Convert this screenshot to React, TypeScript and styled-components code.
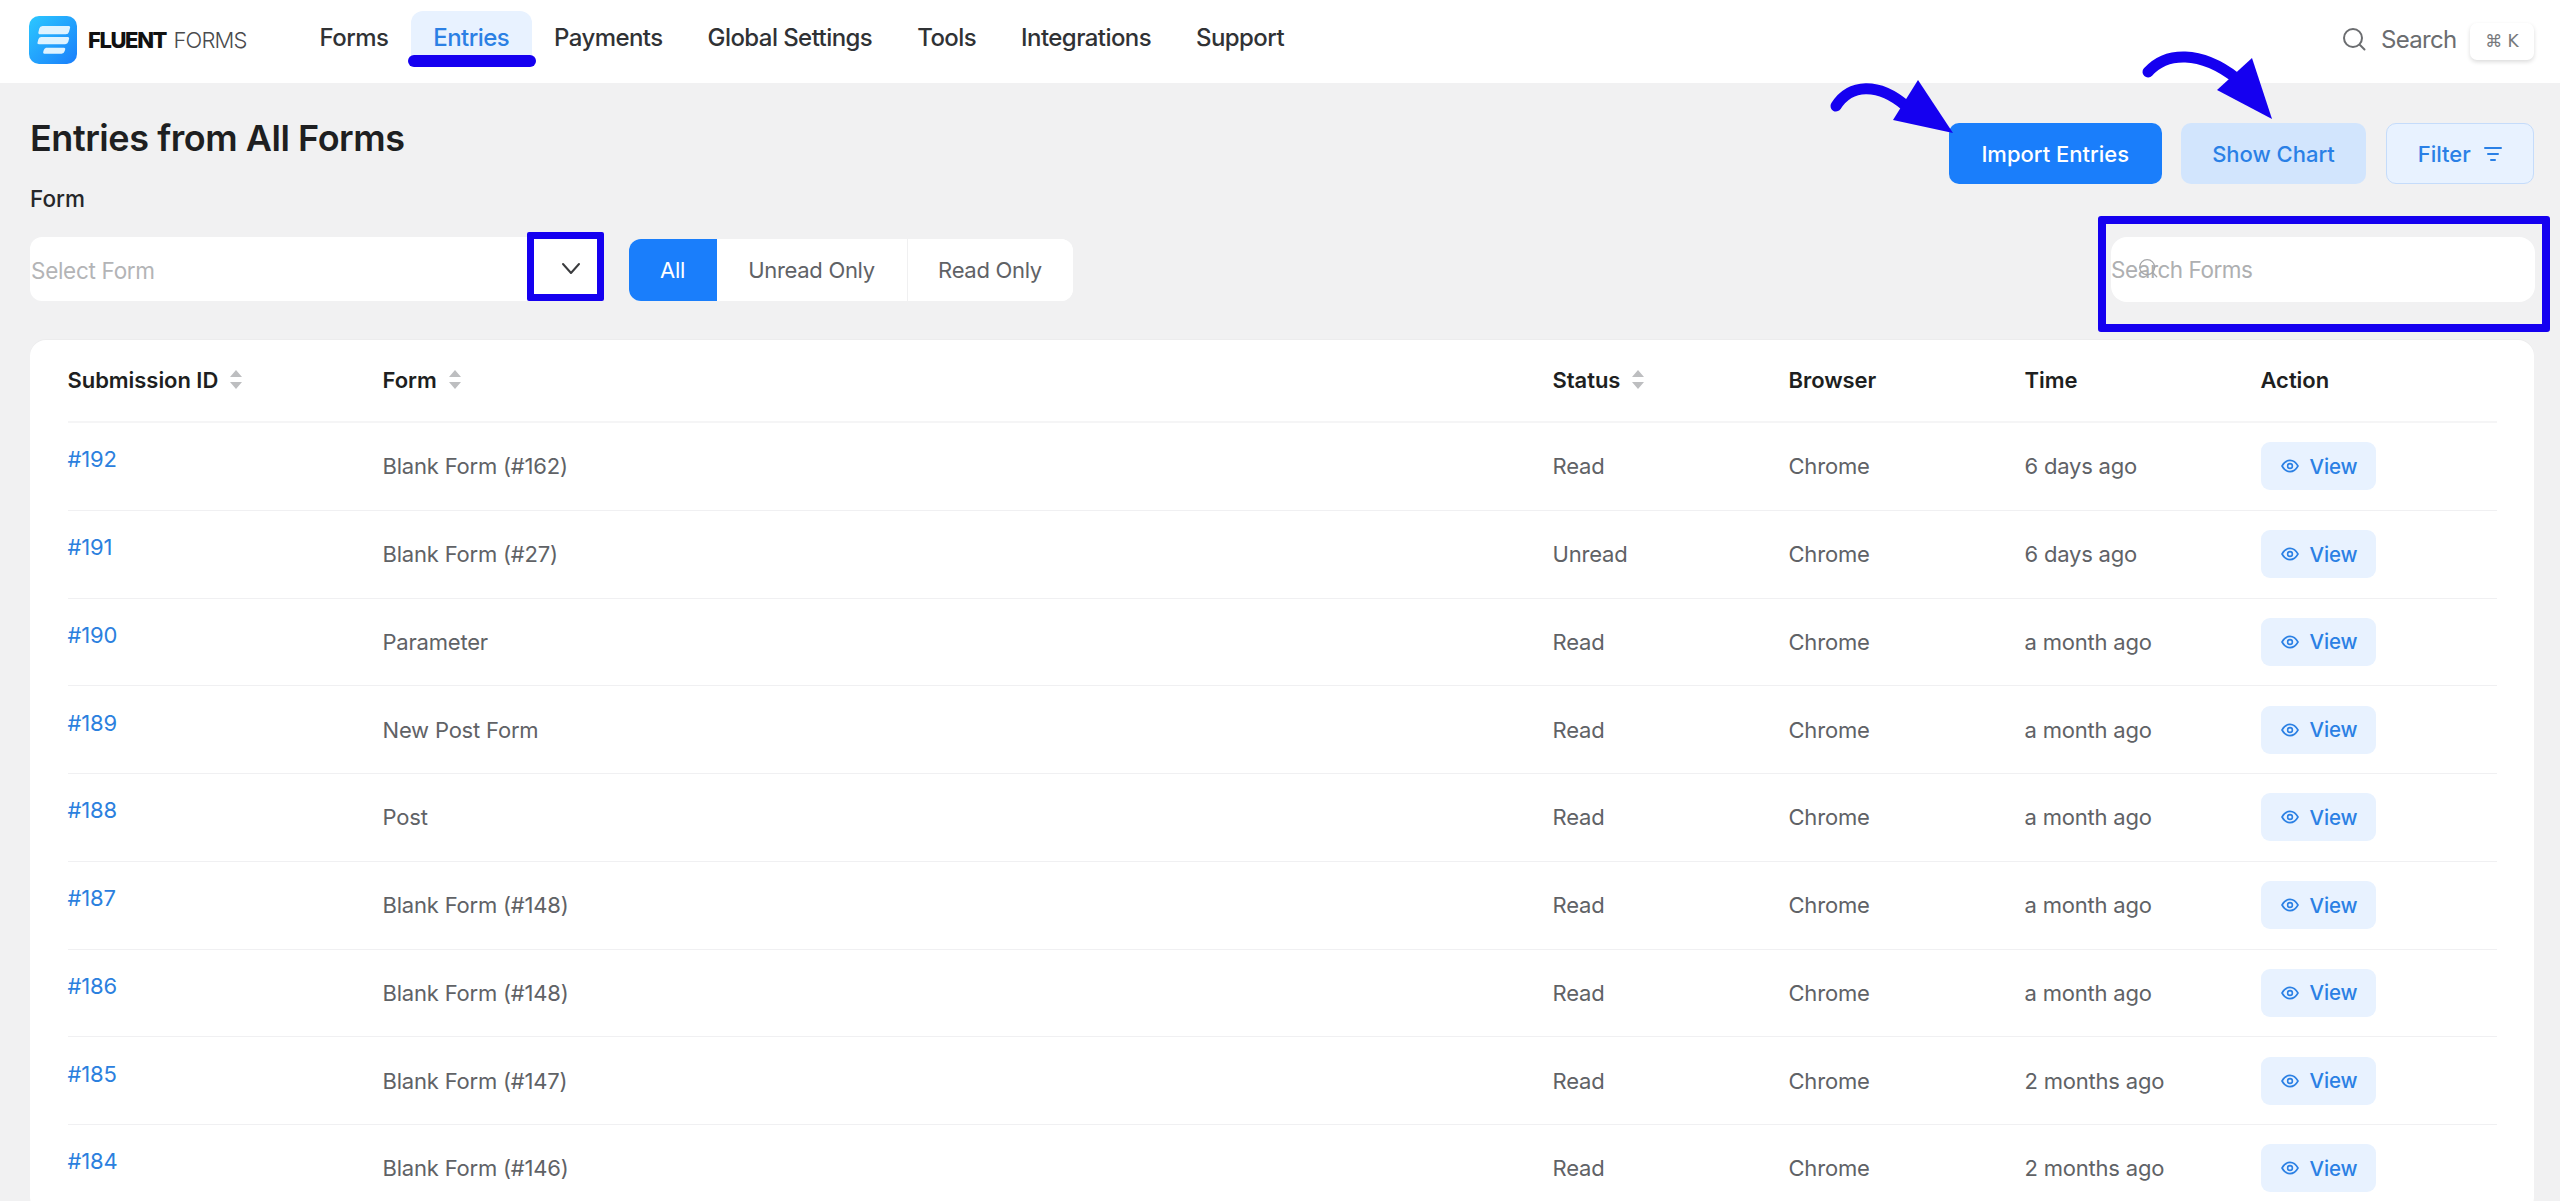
import React from "react";
import styled, { createGlobalStyle } from "styled-components";

const Global = createGlobalStyle`
  html, body { margin: 0; padding: 0; height: 1201px; overflow: hidden; background: #f1f1f2; }
  body { font-family: Inter, "Liberation Sans", sans-serif; color: #1e1f21; }
  * { box-sizing: border-box; }
`;

const Page = styled.div`
  position: relative;
  width: 2560px;
  height: 1201px;
  overflow: hidden;
`;

const Header = styled.header`
  display: flex;
  align-items: center;
  height: 83px;
  padding: 0 26px 0 29px;
  background: #fff;
`;

const Brand = styled.div`
  display: flex;
  align-items: center;
  width: 268px;
  gap: 11px;
  margin-top: -3px;
`;

const BrandText = styled.div`
  font-size: 22px;
  line-height: 24px;
  color: #4a4b4d;
  font-weight: 300;
  letter-spacing: -0.9px;
  white-space: nowrap;
  b { font-weight: 800; color: #111; margin-right: 7.5px; letter-spacing: -1.4px; }
`;

const Nav = styled.nav`
  display: flex;
  height: 52px;
  margin-bottom: 9px;
`;

const NavItem = styled.a<{ $active?: boolean }>`
  position: relative;
  display: flex;
  align-items: center;
  height: 52px;
  padding: 0 22.5px;
  font-size: 24px;
  font-weight: 500;
  letter-spacing: -0.57px;
  white-space: nowrap;
  color: ${(p) => (p.$active ? "#2b80e4" : "#303235")};
  background: ${(p) => (p.$active ? "#e8f2ff" : "transparent")};
  border-radius: 12px 12px 0 0;
  ${(p) =>
    p.$active
      ? `&::after {
          content: "";
          position: absolute;
          left: -3px;
          right: -4px;
          top: 44px;
          height: 12px;
          border-radius: 6px;
          background: #1500f0;
        }`
      : ""}
`;

const HeadSearch = styled.div`
  display: flex;
  align-items: center;
  margin-left: auto;
  margin-bottom: 1px;
  color: #6b6d70;
  svg { margin-bottom: 4px; }
`;

const HeadSearchLabel = styled.span`
  margin-left: 15px;
  font-size: 24px;
  letter-spacing: -0.7px;
  width: 89px;
  margin-bottom: 3px;
`;

const Kbd = styled.kbd`
  display: flex;
  align-items: center;
  justify-content: center;
  gap: 6px;
  width: 64px;
  height: 37px;
  border-radius: 7px;
  background: #fff;
  box-shadow: 0 2px 4px rgba(0, 0, 0, 0.14);
  font-family: "DejaVu Sans", sans-serif;
  font-size: 17px;
  color: #77797c;
`;

const Main = styled.main`
  padding: 0 26px 0 30px;
`;

const TopRow = styled.div`
  display: flex;
  justify-content: space-between;
  align-items: flex-start;
  height: 61px;
  margin-top: 40px;
`;

const Title = styled.h1`
  margin: 0;
  font-size: 36px;
  line-height: 30px;
  font-weight: 600;
  color: #1e1f21;
  letter-spacing: -0.45px;
`;

const Actions = styled.div`
  display: flex;
  gap: 19.5px;
`;

const ActionButton = styled.button<{ $kind: "primary" | "soft" | "ghost" }>`
  display: flex;
  align-items: center;
  justify-content: center;
  gap: 13px;
  height: 61px;
  width: ${(p) => (p.$kind === "primary" ? "212.5px" : p.$kind === "soft" ? "185px" : "148.5px")};
  border-radius: 10px;
  font-family: inherit;
  font-size: 22px;
  font-weight: 500;
  border: ${(p) => (p.$kind === "ghost" ? "1px solid #c5dcfb" : "none")};
  color: ${(p) => (p.$kind === "primary" ? "#fff" : "#2a80e6")};
  background: ${(p) =>
    p.$kind === "primary" ? "#1a7efb" : p.$kind === "soft" ? "#d2e5fd" : "#e8f2ff"};
`;

const FieldLabel = styled.label`
  display: block;
  font-size: 22.5px;
  line-height: 30px;
  font-weight: 500;
  color: #26272a;
`;

const FilterRow = styled.div`
  display: flex;
  align-items: flex-start;
  gap: 24.5px;
  height: 65px;
  margin-top: 23px;
`;

const SelectField = styled.div`
  position: relative;
  display: flex;
  align-items: center;
  width: 574px;
  height: 64px;
  padding: 2px 0 0 1px;
  background: #fff;
  border-radius: 12px;
  font-size: 22.5px;
  letter-spacing: -0.3px;
  color: #b3b4b6;
`;

const ChevronFrame = styled.div`
  position: absolute;
  top: -5px;
  right: 0;
  display: flex;
  align-items: center;
  justify-content: center;
  width: 77px;
  height: 69px;
  padding: 3px 0 0 10px;
  border: 7.5px solid #1500f0;
  border-radius: 2px;
  color: #3a3b3d;
`;

const Segments = styled.div`
  display: flex;
  height: 62px;
  margin-top: 2px;
  border-radius: 12px;
  overflow: hidden;
  background: #fff;
`;

const Segment = styled.button<{ $active?: boolean; $w: number }>`
  width: ${(p) => p.$w}px;
  padding: 0;
  border: none;
  border-left: ${(p) => (p.$active ? "none" : "1px solid #f0f0f1")};
  background: ${(p) => (p.$active ? "#1a7efb" : "#fff")};
  color: ${(p) => (p.$active ? "#fff" : "#606266")};
  font-family: inherit;
  font-size: 22px;
  letter-spacing: -0.3px;
  &:nth-child(2) { border-left: none; }
`;

const SearchField = styled.div`
  position: relative;
  display: flex;
  align-items: center;
  width: 424px;
  height: 65px;
  margin-left: auto;
  margin-right: -1px;
  background: #fff;
  border-radius: 16px;
  font-size: 22.5px;
  letter-spacing: -0.5px;
  color: #aeafb1;
`;

const SearchGlyph = styled.span`
  position: absolute;
  left: 27px;
  top: 21px;
  display: flex;
  color: #a5a6a8;
`;

const SearchFrame = styled.div`
  position: absolute;
  left: -13px;
  top: -21px;
  right: -15px;
  bottom: -30px;
  border: 8px solid #1500f0;
  border-radius: 3px;
  pointer-events: none;
`;

const Card = styled.section`
  margin-top: 38px;
  padding: 0 37px 0 37.5px;
  background: #fff;
  border-radius: 16px;
  box-shadow: 0 -1px 0 #ececed;
`;

const Row = styled.div<{ $head?: boolean }>`
  display: grid;
  grid-template-columns: 315px 1170px 236px 236px 236px 236px;
  height: ${(p) => (p.$head ? "83px" : "87.75px")};
  border-bottom: ${(p) => (p.$head ? "2px solid #f5f5f6" : "1px solid #f0f0f2")};
`;

const HeadCell = styled.div`
  display: flex;
  align-items: center;
  gap: 12px;
  padding-bottom: 2px;
  font-size: 22px;
  font-weight: 600;
  letter-spacing: -0.05px;
  color: #1e1f21;
`;

const Cell = styled.div`
  display: flex;
  align-items: center;
  font-size: 22px;
  letter-spacing: -0.2px;
  color: #606266;
`;

const IdCell = styled(Cell)`
  padding-bottom: 14px;
  color: #2b80de;
`;

const ViewButton = styled.button`
  display: flex;
  align-items: center;
  gap: 11px;
  width: 115px;
  height: 48px;
  padding: 0 0 0 20px;
  border: none;
  border-radius: 9px;
  background: #e8f2ff;
  color: #2b80e4;
  font-family: inherit;
  font-size: 20.5px;
  font-weight: 500;
  letter-spacing: -0.1px;
`;

const ArrowLayer = styled.svg`
  position: absolute;
  left: 0;
  top: 0;
  pointer-events: none;
`;

const Logo = () => (
  <svg width="48" height="48" viewBox="0 0 48 48" aria-hidden="true">
    <defs>
      <linearGradient id="lg" x1="0" y1="0" x2="1" y2="1">
        <stop offset="0" stopColor="#2cc8ff" />
        <stop offset="1" stopColor="#1a7efb" />
      </linearGradient>
    </defs>
    <rect width="48" height="48" rx="10" fill="url(#lg)" />
    <path d="M13.5 10h26a1.6 1.6 0 0 1 1.5 2.1l-1 3.6a3.4 3.4 0 0 1-3.2 2.6H11a1.6 1.6 0 0 1-1.6-2.1l.9-3.6A3.4 3.4 0 0 1 13.5 10Z" fill="#dff3ff" />
    <path d="M12 21h26.6a1.5 1.5 0 0 1 1.4 2l-.7 2.7a3.3 3.3 0 0 1-3.1 2.5H10a1.5 1.5 0 0 1-1.4-2l.7-2.7A3.3 3.3 0 0 1 12 21Z" fill="#dff3ff" />
    <path d="M17 31.7h18a1.3 1.3 0 0 1 1.2 1.7l-.6 1.9a3.3 3.3 0 0 1-3 2.4H15.4a1.3 1.3 0 0 1-1.2-1.7l.6-1.9a3.3 3.3 0 0 1 2.2-2.4Z" fill="#dff3ff" />
  </svg>
);

const MagnifierIcon = ({ size, w }: { size: number; w: number }) => (
  <svg width={size} height={size} viewBox="0 0 24 24" fill="none" stroke="currentColor" strokeWidth={w} strokeLinecap="round">
    <circle cx="11" cy="11" r="9" />
    <path d="m18 18 4.5 4.5" />
  </svg>
);

const Chevron = () => (
  <svg width="20" height="13" viewBox="0 0 20 13" fill="none" stroke="currentColor" strokeWidth="2" strokeLinecap="round" strokeLinejoin="round">
    <path d="m2 2 8 9 8-9" />
  </svg>
);

const FilterLines = () => (
  <svg width="18" height="16" viewBox="0 0 18 16" fill="none" stroke="currentColor" strokeWidth="2" strokeLinecap="round">
    <path d="M1 2h16M4 8h10M7 14h4" />
  </svg>
);

const SortIcon = () => (
  <svg width="12" height="19" viewBox="0 0 12 19" fill="#bdbec0">
    <path d="M6 0l6 7H0zM6 19l6-7H0z" />
  </svg>
);

const EyeIcon = () => (
  <svg width="18" height="14" viewBox="0 0 18 14" fill="none" stroke="currentColor" strokeWidth="1.6">
    <path d="M1 7c2-3.6 4.8-5.6 8-5.6S15 3.4 17 7c-2 3.6-4.8 5.6-8 5.6S3 10.6 1 7Z" />
    <circle cx="9" cy="7" r="2.4" />
  </svg>
);

type Entry = [string, string, string, string];

const entries: Entry[] = [
  ["#192", "Blank Form (#162)", "Read", "6 days ago"],
  ["#191", "Blank Form (#27)", "Unread", "6 days ago"],
  ["#190", "Parameter", "Read", "a month ago"],
  ["#189", "New Post Form", "Read", "a month ago"],
  ["#188", "Post", "Read", "a month ago"],
  ["#187", "Blank Form (#148)", "Read", "a month ago"],
  ["#186", "Blank Form (#148)", "Read", "a month ago"],
  ["#185", "Blank Form (#147)", "Read", "2 months ago"],
  ["#184", "Blank Form (#146)", "Read", "2 months ago"],
];

const navItems = ["Forms", "Entries", "Payments", "Global Settings", "Tools", "Integrations", "Support"];

export default function App() {
  return (
    <Page>
      <Global />
      <Header>
        <Brand>
          <Logo />
          <BrandText>
            <b>FLUENT</b>FORMS
          </BrandText>
        </Brand>
        <Nav>
          {navItems.map((n) => (
            <NavItem key={n} $active={n === "Entries"}>
              {n}
            </NavItem>
          ))}
        </Nav>
        <HeadSearch>
          <MagnifierIcon size={24} w={2} />
          <HeadSearchLabel>Search</HeadSearchLabel>
          <Kbd>⌘ K</Kbd>
        </HeadSearch>
      </Header>
      <Main>
        <TopRow>
          <Title>Entries from All Forms</Title>
          <Actions>
            <ActionButton $kind="primary">Import Entries</ActionButton>
            <ActionButton $kind="soft">Show Chart</ActionButton>
            <ActionButton $kind="ghost">
              Filter
              <FilterLines />
            </ActionButton>
          </Actions>
        </TopRow>
        <FieldLabel>Form</FieldLabel>
        <FilterRow>
          <SelectField>
            Select Form
            <ChevronFrame>
              <Chevron />
            </ChevronFrame>
          </SelectField>
          <Segments>
            <Segment $active $w={88}>All</Segment>
            <Segment $w={190}>Unread Only</Segment>
            <Segment $w={166}>Read Only</Segment>
          </Segments>
          <SearchField>
            Search Forms
            <SearchGlyph>
              <MagnifierIcon size={20} w={1.5} />
            </SearchGlyph>
            <SearchFrame />
          </SearchField>
        </FilterRow>
        <Card>
          <Row $head>
            <HeadCell>Submission ID <SortIcon /></HeadCell>
            <HeadCell>Form <SortIcon /></HeadCell>
            <HeadCell>Status <SortIcon /></HeadCell>
            <HeadCell>Browser</HeadCell>
            <HeadCell>Time</HeadCell>
            <HeadCell>Action</HeadCell>
          </Row>
          {entries.map(([id, form, status, time]) => (
            <Row key={id}>
              <IdCell>{id}</IdCell>
              <Cell>{form}</Cell>
              <Cell>{status}</Cell>
              <Cell>Chrome</Cell>
              <Cell>{time}</Cell>
              <Cell>
                <ViewButton>
                  <EyeIcon />
                  View
                </ViewButton>
              </Cell>
            </Row>
          ))}
        </Card>
      </Main>
      <ArrowLayer width="2560" height="1201" viewBox="0 0 2560 1201" aria-hidden="true">
        <path d="M1836 106C1850 84 1878 82 1906 106" fill="none" stroke="#1500f0" strokeWidth="11" strokeLinecap="round" />
        <path d="M1953 133 1918 80 1893 120Z" fill="#1500f0" />
        <path d="M2148 72C2166 52 2200 50 2236 78" fill="none" stroke="#1500f0" strokeWidth="11" strokeLinecap="round" />
        <path d="M2272 119 2252 58 2217 90Z" fill="#1500f0" />
      </ArrowLayer>
    </Page>
  );
}
